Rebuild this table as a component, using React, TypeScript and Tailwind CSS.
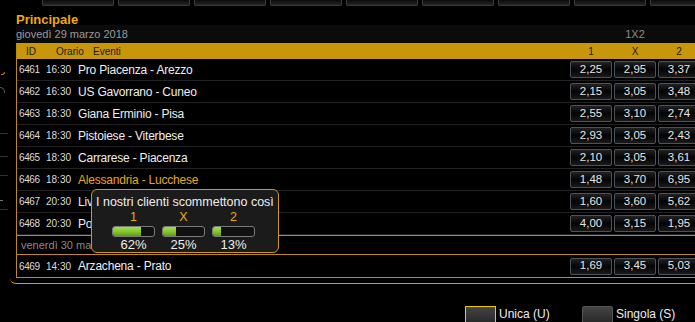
import React from "react"

type Match = {
  id: string
  time: string
  name: string
  odds: [string, string, string]
  hot?: boolean
}

const giovedi: Match[] = [
  { id: "6461", time: "16:30", name: "Pro Piacenza - Arezzo", odds: ["2,25", "2,95", "3,37"] },
  { id: "6462", time: "16:30", name: "US Gavorrano - Cuneo", odds: ["2,15", "3,05", "3,48"] },
  { id: "6463", time: "18:30", name: "Giana Erminio - Pisa", odds: ["2,55", "3,10", "2,74"] },
  { id: "6464", time: "18:30", name: "Pistoiese - Viterbese", odds: ["2,93", "3,05", "2,43"] },
  { id: "6465", time: "18:30", name: "Carrarese - Piacenza", odds: ["2,10", "3,05", "3,61"] },
  { id: "6466", time: "18:30", name: "Alessandria - Lucchese", odds: ["1,48", "3,70", "6,95"], hot: true },
  { id: "6467", time: "20:30", name: "Livorno - Olbia", odds: ["1,60", "3,60", "5,62"] },
  { id: "6468", time: "20:30", name: "Pontedera - Siena", odds: ["4,00", "3,15", "1,95"] },
]

const venerdi: Match[] = [
  { id: "6469", time: "14:30", name: "Arzachena - Prato", odds: ["1,69", "3,45", "5,03"] },
]

const split = [
  { label: "1", pct: 62 },
  { label: "X", pct: 25 },
  { label: "2", pct: 13 },
]

function Odd({ value }: { value: string }) {
  return (
    <div className="w-[42px] h-[17px] flex items-center justify-center rounded-[2px] border border-[#4a535c] bg-gradient-to-b from-[#222] via-[#050505] to-[#1a1a1a] text-[11.5px] text-[#e6e6e6]">
      {value}
    </div>
  )
}

function Row({ m, last }: { m: Match; last?: boolean }) {
  return (
    <div
      className={
        "flex items-center pr-[4px] " +
        (last ? "h-[23px] border-b border-[#c08a10]" : "h-[22px] border-b border-[#222]")
      }
    >
      <span className="w-[29px] pl-[2px] text-[10px] tracking-[-0.4px] text-[#ddd]">{m.id}</span>
      <span className="w-[32px] text-[10px] text-[#ddd]">{m.time}</span>
      <span className={"flex-1 text-[12px] tracking-[-0.2px] " + (m.hot ? "text-[#eba80e]" : "text-[#eee]")}>
        {m.name}
      </span>
      <div className="flex gap-[2px]">
        {m.odds.map((o, i) => (
          <Odd key={i} value={o} />
        ))}
      </div>
    </div>
  )
}

function Tooltip() {
  return (
    <div className="absolute left-[91px] top-[189px] w-[188px] h-[64px] rounded-[6px] border border-[#d09a10] bg-[#1b1b1b] pl-[4px] pt-[3px]">
      <div className="text-[12.5px] leading-[18px] text-[#eee]">I nostri clienti scommettono così</div>
      <div className="flex gap-[7px] pl-[16px]">
        {split.map((s) => (
          <div key={s.label} className="w-[43px] flex flex-col items-center">
            <span className="text-[12.5px] leading-[13px] text-[#eba80e]">{s.label}</span>
            <div className="mt-[2px] w-[43px] h-[11px] rounded-[3px] border border-[#7a7a7a] bg-[#111] overflow-hidden">
              <div
                className="h-full bg-gradient-to-b from-[#a6dc4a] via-[#86c82a] to-[#5c9e12]"
                style={{ width: `${s.pct * 0.4 + 3}px` }}
              />
            </div>
            <span className="text-[13px] leading-[15px] text-[#eee]">{s.pct}%</span>
          </div>
        ))}
      </div>
    </div>
  )
}

export default function App() {
  const tabs = Array.from({ length: 9 })

  return (
    <div
      className="relative w-[695px] h-[322px] overflow-hidden bg-black"
      style={{ fontFamily: '"Liberation Sans", Arial, sans-serif' }}
    >
      <div className="flex gap-[4px] pl-[42px] h-[6px]">
        {tabs.map((_, i) => (
          <div
            key={i}
            className="w-[72px] shrink-0 h-[6px] rounded-b-[2px] border-x border-b border-[#3a3a3a] bg-gradient-to-b from-[#0c0c0c] to-[#262626]"
          />
        ))}
      </div>

      <div className="flex">
        <div className="w-[10px] shrink-0 flex flex-col pt-[66px]">
          <div className="ml-[1px] w-[4px] h-[3px] border-b border-r border-[#b07a10] rounded-br-[3px]" />
          <div className="mt-[12px] w-[5px] h-[6px] border-t border-r border-[#555] rounded-tr-[5px]" />
          <div className="mt-[40px] w-[8px] h-px bg-[#333]" />
          <div className="mt-[22px] w-[8px] h-px bg-[#333]" />
          <div className="mt-[18px] w-[8px] h-px bg-[#333]" />
          <div className="mt-[24px] w-[3px] h-px bg-[#777]" />
          <div className="mt-[8px] w-[8px] h-px bg-[#333]" />
        </div>

        <div className="w-[694px] shrink-0 pl-[6px] pb-[5px] border-b border-[#d89c0c] rounded-bl-[6px]">
          <div className="h-[19px] pt-[6px] text-[13px] leading-[16px] font-bold text-[#f2a900]">Principale</div>

          <div className="h-[18px] flex items-center bg-[#0b0b0b]">
            <span className="flex-1 text-[11px] text-[#9a9a9a]">giovedì 29 marzo 2018</span>
            <span className="w-[134px] pr-[4px] text-center text-[11px] text-[#8c8c8c]">1X2</span>
          </div>

          <div className="border-l border-[#c08a10]">
            <div className="h-[16px] flex items-center pr-[4px] bg-[#c8960a] text-[10px] text-[#1a1a1a]">
              <span className="w-[39px] pl-[9px]">ID</span>
              <span className="w-[37px]">Orario</span>
              <span className="flex-1">Eventi</span>
              <div className="flex gap-[2px]">
                <span className="w-[42px] text-center">1</span>
                <span className="w-[42px] text-center">X</span>
                <span className="w-[42px] text-center">2</span>
              </div>
            </div>

            {giovedi.map((m) => (
              <Row key={m.id} m={m} />
            ))}

            <div className="h-[20px] flex items-center border-y border-[#c08a10] pl-[4px] text-[11px] text-[#8a8a8a]">
              venerdì 30 marzo 2018
            </div>

            {venerdi.map((m) => (
              <Row key={m.id} m={m} last />
            ))}
          </div>
        </div>
      </div>

      <div className="flex items-start pt-[22px] pl-[465px] gap-[3px]">
        <div className="w-[31px] h-[30px] shrink-0 border border-[#e6cc00] bg-gradient-to-b from-[#444] to-[#151515]" />
        <span className="w-[80px] shrink-0 pt-[1px] text-[12px] leading-[15px] text-[#eee]">Unica (U)</span>
        <div className="w-[31px] h-[30px] shrink-0 border border-[#555] rounded-[2px] bg-gradient-to-b from-[#444] to-[#151515]" />
        <span className="w-[77px] shrink-0 pt-[1px] text-[12px] leading-[15px] text-[#eee]">Singola (S)</span>
        <div className="w-[31px] h-[30px] shrink-0 border border-[#1e9e28] bg-gradient-to-b from-[#444] to-[#151515]" />
      </div>

      <Tooltip />
    </div>
  )
}
